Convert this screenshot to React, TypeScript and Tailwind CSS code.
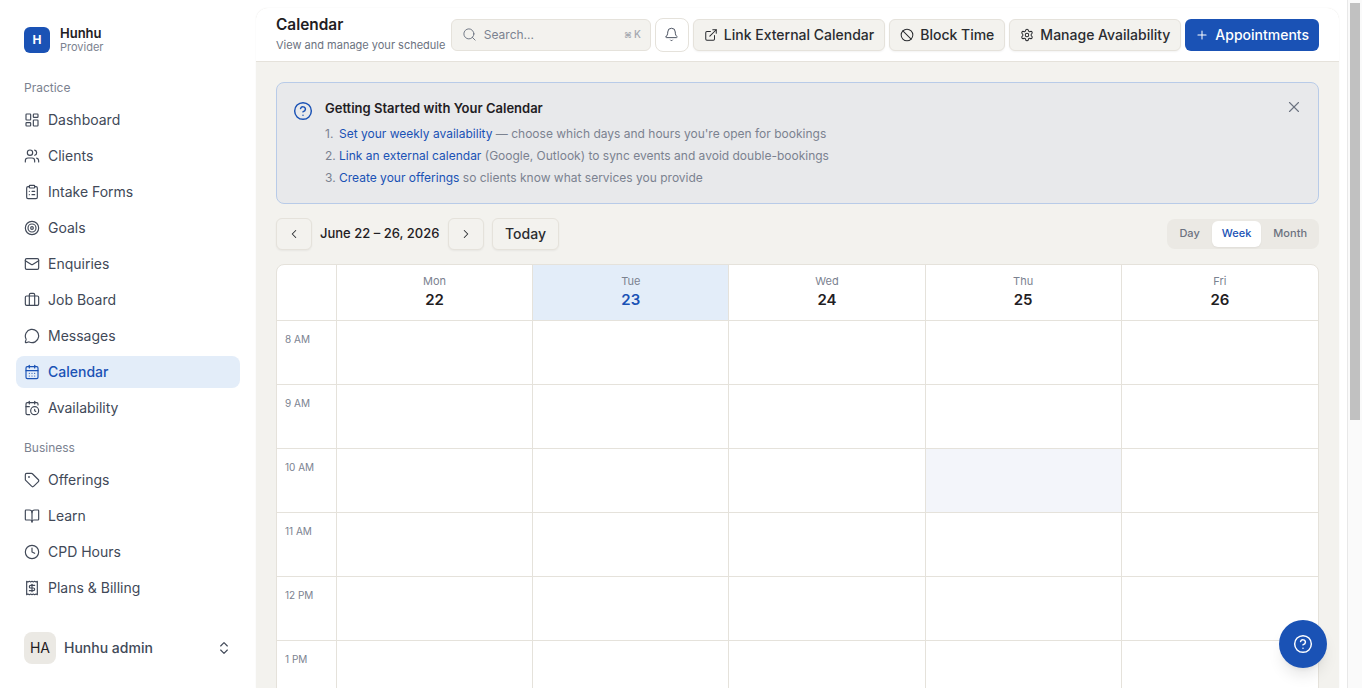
import {
  LayoutDashboard,
  Users,
  ClipboardList,
  Target,
  Mail,
  Briefcase,
  MessageCircle,
  CalendarDays,
  CalendarClock,
  Tag,
  BookOpen,
  Clock,
  Receipt,
  ChevronsUpDown,
  Search,
  Bell,
  ExternalLink,
  Ban,
  Settings,
  Plus,
  CircleHelp,
  X,
  ChevronLeft,
  ChevronRight,
} from "lucide-react";

const practice = [
  { label: "Dashboard", icon: LayoutDashboard },
  { label: "Clients", icon: Users },
  { label: "Intake Forms", icon: ClipboardList },
  { label: "Goals", icon: Target },
  { label: "Enquiries", icon: Mail },
  { label: "Job Board", icon: Briefcase },
  { label: "Messages", icon: MessageCircle },
  { label: "Calendar", icon: CalendarDays, active: true },
  { label: "Availability", icon: CalendarClock },
];

const business = [
  { label: "Offerings", icon: Tag },
  { label: "Learn", icon: BookOpen },
  { label: "CPD Hours", icon: Clock },
  { label: "Plans & Billing", icon: Receipt },
];

const days = [
  { name: "Mon", num: 22 },
  { name: "Tue", num: 23, today: true },
  { name: "Wed", num: 24 },
  { name: "Thu", num: 25 },
  { name: "Fri", num: 26 },
];

const hours = ["8 AM", "9 AM", "10 AM", "11 AM", "12 PM", "1 PM"];

function NavItem({ label, icon: Icon, active }: { label: string; icon: any; active?: boolean }) {
  return (
    <div
      className={`flex items-center gap-2 h-8 px-2 rounded-lg text-sm ${
        active ? "bg-[#e3edf9] text-[#1a52b5] font-medium" : "text-[#414958]"
      }`}
    >
      <Icon size={16} strokeWidth={1.75} />
      <span>{label}</span>
    </div>
  );
}

function Sidebar() {
  return (
    <aside className="w-[256px] shrink-0 h-full flex flex-col px-4 bg-white">
      <div className="flex items-center gap-[10px] px-2 pt-[26px]">
        <div className="w-[26px] h-[26px] rounded-md bg-[#1a52b5] flex items-center justify-center text-white text-xs font-bold">
          H
        </div>
        <div className="flex flex-col">
          <span className="text-[13px] leading-[14px] font-semibold text-[#1f2023]">Hunhu</span>
          <span className="text-[11px] leading-[14px] text-[#7b8290]">Provider</span>
        </div>
      </div>
      <div className="px-2 mt-[26px] mb-[8px] text-xs leading-4 text-[#7b8290]">Practice</div>
      <nav className="flex flex-col gap-1">
        {practice.map((item) => (
          <NavItem key={item.label} {...item} />
        ))}
      </nav>
      <div className="px-2 mt-[16px] mb-[8px] text-xs leading-4 text-[#7b8290]">Business</div>
      <nav className="flex flex-col gap-1">
        {business.map((item) => (
          <NavItem key={item.label} {...item} />
        ))}
      </nav>
      <div className="flex items-center gap-2 px-2 mt-[28px]">
        <div className="w-8 h-8 rounded-lg bg-[#ebe9e4] flex items-center justify-center text-sm text-[#1f2023]">
          HA
        </div>
        <span className="flex-1 text-sm font-medium text-[#414958]">Hunhu admin</span>
        <ChevronsUpDown size={16} strokeWidth={1.75} className="text-[#414958]" />
      </div>
    </aside>
  );
}

function HeaderButton({ icon: Icon, label }: { icon: any; label: string }) {
  return (
    <button className="flex items-center gap-[6px] h-8 px-[10px] rounded-md border border-[#e5e2db] bg-[#f3f2ee] text-sm font-medium text-[#2a2c30] shadow-xs">
      <Icon size={14} strokeWidth={1.75} />
      {label}
    </button>
  );
}

function Header() {
  return (
    <header className="h-[54px] shrink-0 flex items-center justify-between pl-5 pr-5 bg-white border-b border-[#e5e2db] rounded-t-xl">
      <div className="flex flex-col pb-[2px]">
        <span className="text-[15.4px] leading-5 font-semibold text-[#1f2023]">Calendar</span>
        <span className="mt-[2px] text-[11px] leading-4 text-[#6b7280]">View and manage your schedule</span>
      </div>
      <div className="flex items-center gap-1">
        <div className="w-[200px] h-8 flex items-center gap-[7px] pl-[10px] pr-[9px] rounded-md border border-[#e5e2db] bg-[#f3f2ee]">
          <Search size={15} strokeWidth={1.5} className="text-[#6b7280]" />
          <span className="flex-1 text-xs text-[#7b8290]">Search...</span>
          <span className="flex items-center gap-[2px] text-[10px] font-medium text-[#a3a7af]">
            <span className="text-[8px]">⌘</span>K
          </span>
        </div>
        <div className="w-[34px] h-[34px] flex items-center justify-center rounded-lg border border-[#e5e2db] bg-white">
          <Bell size={15} strokeWidth={1.5} className="text-[#414958]" />
        </div>
        <HeaderButton icon={ExternalLink} label="Link External Calendar" />
        <HeaderButton icon={Ban} label="Block Time" />
        <HeaderButton icon={Settings} label="Manage Availability" />
        <button className="flex items-center gap-[6px] h-8 px-[10px] rounded-md bg-[#1a52b5] text-sm font-medium text-white">
          <Plus size={14} strokeWidth={1.75} />
          Appointments
        </button>
      </div>
    </header>
  );
}

function Banner() {
  return (
    <div className="relative h-[122px] flex gap-3 pl-4 pt-[16px] rounded-lg border border-[#b8cbe8] bg-[#e8e9eb]">
      <CircleHelp size={20} strokeWidth={1.75} className="text-[#1a52b5] mt-[2px]" />
      <div className="flex flex-col">
        <span className="text-[13px] leading-[18px] font-semibold text-[#1f2023] mb-[6px]">
          Getting Started with Your Calendar
        </span>
        <ol className="text-xs leading-[22px] text-[#7b8290]">
          <li>
            <span className="inline-block w-[14px]">1.</span>
            <span className="text-[#1a52b5]">Set your weekly availability</span> — choose which days and hours you're open for bookings
          </li>
          <li>
            <span className="inline-block w-[14px]">2.</span>
            <span className="text-[#1a52b5]">Link an external calendar</span> (Google, Outlook) to sync events and avoid double-bookings
          </li>
          <li>
            <span className="inline-block w-[14px]">3.</span>
            <span className="text-[#1a52b5]">Create your offerings</span> so clients know what services you provide
          </li>
        </ol>
      </div>
      <X size={18} strokeWidth={1.5} className="absolute top-[15px] right-[15px] text-[#6b7280]" />
    </div>
  );
}

function Toolbar() {
  return (
    <div className="flex items-center justify-between mt-[14px] mb-[14px]">
      <div className="flex items-center gap-2">
        <button className="w-9 h-8 flex items-center justify-center rounded-md border border-[#e5e2db] bg-[#f3f2ee] text-[#2a2c30] shadow-xs">
          <ChevronLeft size={14} strokeWidth={1.75} />
        </button>
        <span className="w-[120px] whitespace-nowrap text-[13px] font-medium text-[#1f2023]">June 22 – 26, 2026</span>
        <button className="w-9 h-8 flex items-center justify-center rounded-md border border-[#e5e2db] bg-[#f3f2ee] text-[#2a2c30] shadow-xs">
          <ChevronRight size={14} strokeWidth={1.75} />
        </button>
        <button className="h-8 px-3 rounded-md border border-[#e5e2db] bg-[#f3f2ee] text-sm font-medium text-[#2a2c30] shadow-xs">
          Today
        </button>
      </div>
      <div className="h-[30px] flex items-center gap-[2px] p-[2px] rounded-lg bg-[#ebe9e4] text-[11px] font-medium text-[#6b7280]">
        <span className="px-[10px] pb-[2px]">Day</span>
        <span className="h-[26px] flex items-center px-[10px] pb-[2px] rounded-md bg-white text-[#1a52b5] shadow-xs">Week</span>
        <span className="px-[10px] pb-[2px]">Month</span>
      </div>
    </div>
  );
}

function WeekGrid() {
  return (
    <div className="rounded-lg border border-[#e5e2db] bg-white overflow-hidden">
      <div className="grid grid-cols-[59px_repeat(4,196.2px)_1fr] h-[56px] border-b border-[#e5e2db]">
        <div />
        {days.map((d) => (
          <div
            key={d.name}
            className={`flex flex-col items-center justify-center gap-[1px] pb-[3px] border-l border-[#e5e2db] ${d.today ? "bg-[#e3edf9]" : ""}`}
          >
            <span className="text-[11px] leading-4 text-[#7b8290]">{d.name}</span>
            <span className={`text-[15px] leading-5 font-semibold ${d.today ? "text-[#1a52b5]" : "text-[#1f2023]"}`}>{d.num}</span>
          </div>
        ))}
      </div>
      {hours.map((h) => (
        <div key={h} className="grid grid-cols-[59px_repeat(4,196.2px)_1fr] h-[64px] border-b border-[#e5e2db]">
          <div className="pl-2 pt-[10px] text-[10px] leading-4 text-[#7b8290]">{h}</div>
          {days.map((d) => (
            <div
              key={d.name}
              className={`border-l border-[#e5e2db] ${h === "10 AM" && d.name === "Thu" ? "bg-[#f3f5fa]" : ""}`}
            />
          ))}
        </div>
      ))}
    </div>
  );
}

export default function App() {
  return (
    <div className="w-full h-[688px] flex overflow-hidden bg-white font-[Inter,sans-serif]">
      <Sidebar />
      <main className="flex-1 min-w-0 h-full pt-2 pr-2 flex flex-col">
        <div className="flex-1 min-h-0 flex flex-col bg-[#f3f2ee] rounded-t-xl shadow-[0_0_2px_rgba(0,0,0,0.06)] overflow-hidden">
          <Header />
          <div className="px-5 pt-5">
            <Banner />
            <Toolbar />
            <WeekGrid />
          </div>
        </div>
      </main>
      <div className="w-[15px] shrink-0 h-full bg-[#fafafa] border-l border-[#e8e8e8] px-[2px] pt-[3px]">
        <div className="w-[10px] h-[417px] bg-[#c1c1c1]" />
      </div>
      <button className="fixed right-[35px] bottom-[20px] w-12 h-12 rounded-full bg-[#1a52b5] flex items-center justify-center text-white shadow-lg">
        <CircleHelp size={20} strokeWidth={1.75} />
      </button>
    </div>
  );
}
